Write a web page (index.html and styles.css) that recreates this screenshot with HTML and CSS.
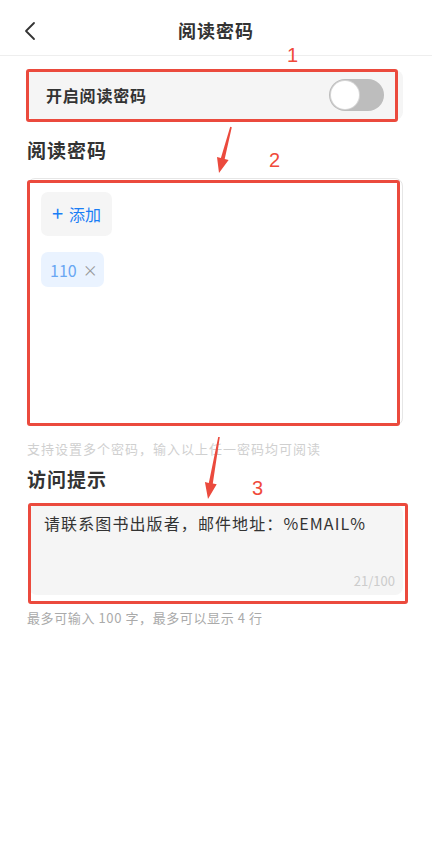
FILE: index.html
```html
<!DOCTYPE html>
<html lang="zh-CN">
<head>
    <meta charset="UTF-8">
    <meta name="viewport" content="width=device-width, initial-scale=1.0">
    <title>阅读密码</title>
    <link rel="stylesheet" href="styles.css">
</head>
<body>
    <div class="nav">
        <span class="nav-back">
            <svg width="14" height="20" viewBox="0 0 14 20"><path d="M10 2 L2 10 L10 18" fill="none" stroke="#333" stroke-width="1.8" stroke-linecap="round" stroke-linejoin="round"/></svg>
        </span>
        <h1 class="nav-title">阅读密码</h1>
    </div>

    <div class="page">
        <div class="switch-row">
            <span class="switch-label">开启阅读密码</span>
            <span class="toggle"><span class="toggle-knob"></span></span>
        </div>

        <h2 class="section-title">阅读密码</h2>
        <div class="pwd-box">
            <button class="add-btn"><span class="plus">+</span>添加</button>
            <div class="tags">
                <span class="tag">110<span class="tag-close">×</span></span>
            </div>
        </div>
        <p class="hint hint-pwd">支持设置多个密码，输入以上任一密码均可阅读</p>

        <h2 class="section-title title-tip">访问提示</h2>
        <div class="tip-box">
            <div class="tip-text">请联系图书出版者，邮件地址：%EMAIL%</div>
            <div class="tip-count">21/100</div>
        </div>
        <p class="hint hint-tip">最多可输入 100 字，最多可以显示 4 行</p>
    </div>

    <!-- annotations -->
    <div class="mark mark-1"></div>
    <div class="mark mark-2"></div>
    <div class="mark mark-3"></div>
    <span class="mark-num num-1">1</span>
    <span class="mark-num num-2">2</span>
    <span class="mark-num num-3">3</span>
    <svg class="arrows" width="432" height="843" viewBox="0 0 432 843">
        <polygon points="230.2,126.8 231.8,127.2 224.7,159 228.6,160 219,173 217,157 220.9,158" fill="#eb4a3d"/>
        <polygon points="218.2,436.9 219.8,437.1 212.8,483.6 216.7,484.2 208,499 204.9,482.1 208.8,482.9" fill="#eb4a3d"/>
    </svg>
</body>
</html>
```

FILE: styles.css
```css
body {
    margin: 0;
    background: #fff;
    font-family: "Noto Sans CJK SC", "Noto Sans", sans-serif;
    color: #333;
    position: relative;
    min-height: 843px;
}

.nav {
    height: 56px;
    border-bottom: 1px solid #eeeeee;
    box-sizing: border-box;
    display: flex;
    align-items: center;
    justify-content: center;
    position: relative;
}
.nav-back {
    position: absolute;
    left: 24px;
    top: 21px;
    display: flex;
}
.nav-title {
    margin: 0;
    font-size: 18px;
    letter-spacing: 1px;
    font-weight: 600;
    color: #333;
    line-height: 24px;
    padding-top: 4px;
}

.page {
    padding: 14px 29px 0 27px;
}

.switch-row {
    height: 50px;
    background: #f5f5f5;
    border-radius: 8px;
    display: flex;
    align-items: center;
    justify-content: space-between;
    padding: 0 19px 0 19px;
}
.switch-label {
    font-size: 16px;
    letter-spacing: 0.8px;
    font-weight: 600;
    color: #333;
}
.toggle {
    width: 55px;
    height: 32px;
    border-radius: 16px;
    background: #bdbdbd;
    display: flex;
    align-items: center;
    padding: 0 2px;
    box-sizing: border-box;
}
.toggle-knob {
    width: 28px;
    height: 28px;
    border-radius: 50%;
    background: #fff;
    box-shadow: 0 0 0 1px #d6d6d6;
}

.section-title {
    margin: 17px 0 15px;
    font-size: 19px;
    letter-spacing: 1px;
    font-weight: 700;
    line-height: 26px;
    color: #333;
}
.title-tip {
    margin: 9px 0 13px;
}

.pwd-box {
    height: 248px;
    box-sizing: border-box;
    border: 1px solid #e6e6e6;
    border-radius: 8px;
    padding: 13px 13px;
    display: flex;
    flex-direction: column;
    align-items: flex-start;
    gap: 16px;
}
.add-btn {
    border: none;
    background: #f5f5f5;
    border-radius: 7px;
    height: 44px;
    width: 71px;
    padding: 0;
    font-family: inherit;
    font-size: 16px;
    color: #1a7ef5;
    display: flex;
    align-items: center;
    justify-content: center;
    gap: 6px;
}
.plus {
    font-size: 20px;
    line-height: 1;
    margin-top: -2px;
}
.tag {
    display: inline-flex;
    align-items: center;
    gap: 6px;
    height: 35px;
    padding: 0 6px 0 9px;
    background: #eaf3ff;
    border-radius: 7px;
    font-size: 16px;
    color: #69a7f3;
}
.tag-close {
    color: #999;
    font-size: 15px;
}

.hint {
    margin: 0;
    font-size: 13px;
    letter-spacing: 1px;
    line-height: 17px;
    color: #d0d0d0;
}
.hint-pwd {
    margin-top: 14px;
}
.hint-tip {
    margin-top: 14px;
    letter-spacing: 0.6px;
    color: #aaaaaa;
}

.tip-box {
    height: 90px;
    margin-left: 2px;
    background: #f5f5f5;
    border-radius: 8px;
    padding: 7px 15px 0;
    box-sizing: border-box;
    position: relative;
}
.tip-text {
    font-size: 16px;
    letter-spacing: 1.1px;
    line-height: 22px;
    color: #333;
}
.tip-count {
    position: absolute;
    right: 8px;
    bottom: 5px;
    font-size: 13px;
    color: #cccccc;
}

/* red annotation overlays */
.mark {
    position: absolute;
    border: 3px solid #eb4a3d;
    border-radius: 3px;
    box-sizing: border-box;
}
.mark-1 { left: 26px; top: 69px; width: 372px; height: 53px; }
.mark-2 { left: 27px; top: 180px; width: 373px; height: 246px; }
.mark-3 { left: 28px; top: 503px; width: 380px; height: 101px; }

.mark-num {
    position: absolute;
    font-family: "Liberation Sans", sans-serif;
    font-size: 20px;
    line-height: 20px;
    color: #f04a3a;
}
.num-1 { left: 287px; top: 45px; }
.num-2 { left: 269px; top: 150px; }
.num-3 { left: 252px; top: 478px; }

.arrows {
    position: absolute;
    left: 0;
    top: 0;
    pointer-events: none;
}
```
